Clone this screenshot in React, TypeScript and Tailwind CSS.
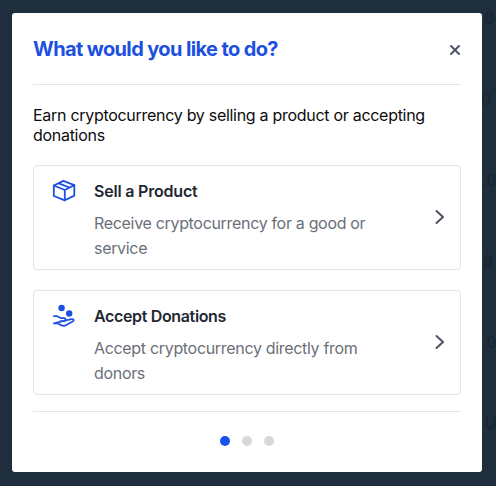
import type { ReactNode } from "react";

function BoxIcon() {
  return (
    <svg width="24" height="24" viewBox="0 0 24 24" fill="none" stroke="#1d4fe0" strokeWidth="1.8" strokeLinejoin="round" strokeLinecap="round">
      <path d="M11.4 1.9 22.3 6.1V16.6L12.8 21.3 1.8 17V6.5Z" />
      <path d="M1.8 6.5 12.8 11 22.3 6.1M12.8 11V21.3M6.8 4.3 17.5 8.5" />
    </svg>
  );
}

function DonateIcon() {
  return (
    <svg width="24" height="24" viewBox="0 0 24 24" fill="none" stroke="#1d4fe0" strokeWidth="1.8" strokeLinejoin="round" strokeLinecap="round">
      <circle cx="9.6" cy="4" r="3.2" fill="#1d4fe0" stroke="none" />
      <circle cx="17.2" cy="9.5" r="3.2" fill="#1d4fe0" stroke="none" />
      <path d="M1.9 12.2H5.2L9.2 14.2H12.2C14.1 14.2 14.1 17.1 12.2 17.1H8.4M13.8 16.4 19.4 15.2C21.8 15 22.5 16.4 20.6 17.5L14 21.2C12.4 22 11.2 21.9 9.6 21.4L5.3 19.3H1.9Z" />
    </svg>
  );
}

function Option({ icon, title, children }: { icon: ReactNode; title: ReactNode; children: ReactNode }) {
  return (
    <button className="flex h-[105px] w-full items-start rounded-[4px] border border-[#e2e3e5] pt-[13px] pl-[18px] pr-[13px] text-left">
      <span className="w-[42px] shrink-0">{icon}</span>
      <span className="block grow whitespace-nowrap">
        <span className="block text-[16px] leading-[25px] font-semibold text-[#1f2733]">{title}</span>
        <span className="mt-[7px] block text-[16px] leading-[25px] text-[#6b6f78]">{children}</span>
      </span>
      <svg className="mt-[29px] shrink-0" width="14" height="18" viewBox="0 0 14 18" fill="none" stroke="#4b5261" strokeWidth="2" strokeLinecap="round" strokeLinejoin="round">
        <path d="M3.5 3 10 9 3.5 15" />
      </svg>
    </button>
  );
}

export default function App() {
  return (
    <div className="relative h-[486px] w-[496px] overflow-hidden bg-[#1f2e3c] px-3 pt-[13px] font-['Inter','Liberation_Sans',sans-serif]">
      <div className="absolute top-0 left-[478px] h-full w-[30px] text-[16px] leading-5 text-[#172431]">
        <span className="absolute top-[8px] left-[6px]">0</span>
        <span className="absolute top-[89px] left-[3px]">0</span>
        <span className="absolute top-[170px] left-[4px]">.0</span>
        <span className="absolute top-[251px] left-[5px]">8</span>
        <span className="absolute top-[332px] left-[4px]">.0</span>
        <span className="absolute top-[413px] left-[7px]">U</span>
      </div>
      <main className="relative h-[459px] w-[470px] rounded-[3px] bg-white px-[21px]">
        <header className="flex h-[72px] items-center justify-between border-b border-[#e5e6e8]">
          <h1 className="text-[20px] leading-6 font-bold tracking-[-0.62px] whitespace-nowrap text-[#1d4fe0]">What would you like to do?</h1>
          <svg className="mt-[2px]" width="12" height="12" viewBox="0 0 12 12" fill="none" stroke="#4b5563" strokeWidth="2" strokeLinecap="round">
            <path d="M2 2 10 10M10 2 2 10" />
          </svg>
        </header>
        <p className="mt-[20px] text-[16px] leading-5 tracking-[-0.29px] whitespace-nowrap text-[#0c0c0e]">
          Earn cryptocurrency by selling a product or accepting
          <br />
          donations
        </p>
        <div className="mt-[20px] flex flex-col gap-5">
          <Option icon={<BoxIcon />} title={<span className="tracking-[-0.2px]">Sell a Product</span>}>
            <span className="tracking-[-0.32px]">
              Receive cryptocurrency for a good or
              <br />
              service
            </span>
          </Option>
          <Option icon={<DonateIcon />} title={<span className="tracking-[-0.35px]">Accept Donations</span>}>
            <span className="tracking-[-0.32px]">
              Accept cryptocurrency directly from
              <br />
              donors
            </span>
          </Option>
        </div>
        <footer className="mt-[16px] flex justify-center gap-3 border-t border-[#e5e6e8] pt-[24px]">
          <i className="size-[10px] rounded-full bg-[#1652f0]" />
          <i className="size-[10px] rounded-full bg-[#d8d8d8]" />
          <i className="size-[10px] rounded-full bg-[#d8d8d8]" />
        </footer>
      </main>
    </div>
  );
}
